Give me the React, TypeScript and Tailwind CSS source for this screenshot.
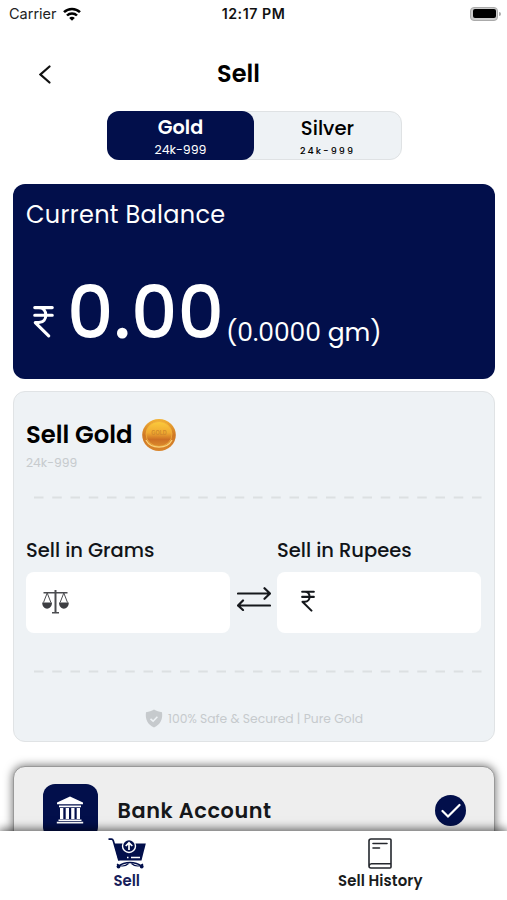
import type { ReactNode } from "react";

const RupeeIcon = ({ className }: { className: string }) => (
  <svg viewBox="0 0 20 32" fill="none" stroke="currentColor" strokeWidth="3" strokeLinecap="round" strokeLinejoin="round" className={className}>
    <path d="M1.500 2.500h17M1.500 10h17M1.500 2.500h4c9 0 9 14.500 0 14.500h-3.500L15 30" />
  </svg>
);

const WifiIcon = () => (
  <svg viewBox="0 0 18 14" className="h-[14px] w-[18px]" fill="none" stroke="#000" strokeWidth="2.500">
    <path d="M1 5.200a11.300 11.300 0 0 1 16 0M4 8.500a7 7 0 0 1 10 0" />
    <path d="M9 13.700 6.200 10.900a3.900 3.900 0 0 1 5.600 0z" fill="#000" stroke="none" />
  </svg>
);

const ScaleIcon = () => (
  <svg viewBox="0 0 27 24" className="h-6 w-[27px]" fill="none" stroke="#4b4c50">
    <path d="M13.500 0v23" strokeWidth="2" />
    <path d="M1.500 2.800h24M10 22.800h7" strokeWidth="1.600" />
    <path d="m5.200 3-3.700 9.500M5.200 3l3.700 9.500M21.800 3l-3.700 9.500M21.800 3l3.700 9.500" strokeWidth="1" />
    <path d="M.2 12.500h9.800c0 8.200-9.800 8.200-9.800 0zM17 12.500h9.800c0 8.200-9.800 8.200-9.800 0z" fill="#3d3e42" stroke="none" />
  </svg>
);

const SwapIcon = () => (
  <svg viewBox="0 0 34 24" className="h-6 w-[34px]" fill="none" stroke="#15181c" strokeWidth="2.200" strokeLinecap="round" strokeLinejoin="round">
    <path d="M1 6.500h32M27.500 1.200l5.500 5.300-5.500 5.300M33 18.500H1M6 13.500 1 18.500l5 4.500" />
  </svg>
);

const CoinIcon = () => (
  <svg viewBox="0 0 34 34" className="h-[34px] w-[34px]">
    <defs>
      <linearGradient id="rim" x1="0" y1="0" x2="0" y2="1">
        <stop offset="0" stopColor="#f3b334" />
        <stop offset=".5" stopColor="#cf7825" />
        <stop offset="1" stopColor="#d9852a" />
      </linearGradient>
      <linearGradient id="face" x1="0" y1="0" x2="0" y2="1">
        <stop offset="0" stopColor="#fbcb3c" />
        <stop offset=".45" stopColor="#f0aa31" />
        <stop offset=".72" stopColor="#cd7024" />
        <stop offset="1" stopColor="#dc8b2d" />
      </linearGradient>
    </defs>
    <ellipse cx="17" cy="17" rx="16.800" ry="16" fill="url(#rim)" />
    <ellipse cx="17" cy="16" rx="13" ry="12.500" fill="url(#face)" stroke="#f0ae3e" strokeWidth=".8" />
    <path d="M4 22c5 9.500 21 9.500 26 0" fill="none" stroke="#fad27a" strokeWidth="1.300" />
    <text x="17" y="17" fontSize="5.500" fontWeight="700" textAnchor="middle" fill="#d08a2c" fontFamily="Inter, sans-serif">
      GOLD
    </text>
  </svg>
);

const ShieldIcon = () => (
  <svg viewBox="0 0 18 19" className="h-[19px] w-[18px]">
    <path d="M9 .5c2.500 1.800 5 2.300 8 2.700C18 10 15.500 15.500 9 18.500 2.500 15.500 0 10 1 3.200 4 2.800 6.500 2.300 9 .5z" fill="#c6cacd" />
    <path d="m5.500 9.800 2.600 2.400 4.300-4.500" fill="none" stroke="#eef2f5" strokeWidth="1.600" />
  </svg>
);

const BankIcon = () => (
  <svg viewBox="0 0 28 28" className="h-7 w-7" fill="#fff">
    <path d="M14 .5 27 6.500v1.800H1V6.500zM3 9.500h22v1.800H3zM4 12h3.300v11H4zM9.700 12H13v11H9.700zM15.200 12h3.300v11h-3.300zM20.700 12H24v11h-3.300zM2.500 23.500h23v1.600h-23zM.8 25.700h26.400v1.700H.8z" />
  </svg>
);

const CartIcon = () => (
  <svg viewBox="0 0 38 31" className="h-[31px] w-[38px]" fill="none" stroke="#020f4b">
    <path d="M.5 1.200h3c1 0 1.500.7 1.800 1.600L11 22.500" strokeWidth="1.700" />
    <path d="M6 5.500h31.800L33.500 22.500h-23z" fill="#020f4b" stroke="none" />
    <path d="M10 28.500C17 23.300 27 23.300 34 28.500" strokeWidth="1.500" />
    <path d="M9 26c3 3 8 2.500 11.500-.5M35 26c-3 3-8 2.500-11.500-.5" strokeWidth="1.200" />
    <circle cx="10.500" cy="28.500" r="1.900" fill="#020f4b" stroke="none" />
    <circle cx="33.700" cy="28.500" r="1.900" fill="#020f4b" stroke="none" />
    <path d="M19 19.500h1.500M23 19.500h9" stroke="#fff" strokeWidth="1.300" />
    <circle cx="21" cy="8" r="6.500" fill="#020f4b" stroke="#fff" strokeWidth="1.400" />
    <path d="M21 12V5.500M17.700 8 21 4.800 24.300 8" stroke="#fff" strokeWidth="1.700" />
  </svg>
);

const HistoryIcon = () => (
  <svg viewBox="0 0 24 31" className="h-[31px] w-6" fill="none" stroke="#24272d" strokeWidth="1.600" strokeLinecap="round">
    <path d="M3 1H22a1 1 0 0 1 1 1V29a1 1 0 0 1-1 1H3A2 2 0 0 1 1 28v-25A2 2 0 0 1 3 1zM1.200 27.500a2.500 2.500 0 0 1 2.300-1.800H23M5 5.500h14M5 10h6.500" />
  </svg>
);

const Dashes = () => (
  <svg viewBox="0 0 450 3" className="h-[3px] w-[450px]">
    <path d="M1 1.500h448" stroke="#dce0e2" strokeWidth="2" strokeDasharray="9.500 8.750" />
  </svg>
);

const Field = ({ label, children }: { label: string; children: ReactNode }) => (
  <div className="w-[204px]">
    <p className="text-[19.5px] leading-7 font-medium whitespace-nowrap text-[#111418]">{label}</p>
    <div className="mt-[7px] flex h-[61px] items-center rounded-lg bg-white">{children}</div>
  </div>
);

export default function App() {
  return (
    <div className="flex h-[900px] w-[507px] flex-col overflow-hidden bg-white font-['Poppins','Inter',sans-serif] text-black">
      <header className="grid h-7 shrink-0 grid-cols-3 items-center font-['Inter',sans-serif]">
        <div className="flex items-center gap-[6px] pl-[9px]">
          <span className="text-[14.5px] text-[#222]">Carrier</span>
          <WifiIcon />
        </div>
        <span className="pb-px text-center text-[14.2px] font-semibold tracking-[0.55px] whitespace-nowrap text-[#111]">12:17 PM</span>
        <div className="flex items-center justify-end gap-px pr-[6px] pb-px">
          <div className="h-[14px] w-[28px] rounded-[4px] border border-[#aaa] bg-[#ccc] p-[1.5px]">
            <div className="h-full rounded-[2px] bg-black" />
          </div>
          <div className="h-1 w-[2px] rounded-r bg-[#aaa]" />
        </div>
      </header>

      <div className="grid h-[83px] shrink-0 grid-cols-3 items-center pt-[9px]">
        <svg viewBox="0 0 12 19" className="ml-[39px] h-[19px] w-3" fill="none" stroke="#111" strokeWidth="2.200" strokeLinecap="round">
          <path d="M10.500 1.500 1.500 9.500l9 8" />
        </svg>
        <h1 className="-ml-[30px] text-center text-[24px] font-semibold">Sell</h1>
      </div>

      <div className="ml-[107px] flex h-[49px] w-[295px] shrink-0 rounded-xl border border-[#dfe2e4] bg-[#eef2f5]">
        <div className="-my-px -ml-px flex w-[147px] flex-col items-center rounded-xl bg-[#020f4b] text-white">
          <span className="mt-[5px] text-[19.2px] leading-6 font-semibold">Gold</span>
          <span className="mt-px text-[12.5px] leading-[18px]">24k-999</span>
        </div>
        <div className="flex flex-1 flex-col items-center">
          <span className="mt-1 text-[19.7px] leading-6 font-medium">Silver</span>
          <span className="mt-[2px] text-[9.5px] leading-[18px] font-medium tracking-[2.1px]">24k-999</span>
        </div>
      </div>

      <section className="mx-[13px] mt-6 h-[195px] w-[482px] shrink-0 rounded-xl bg-[#020f4b] pl-[13px] text-white">
        <h2 className="pt-[14px] text-[24px] leading-[34px] tracking-[0.3px]">Current Balance</h2>
        <div className="mt-[35px] flex">
          <RupeeIcon className="mt-[38px] ml-[7px] h-[33px] w-[21px]" />
          <span className="ml-[13px] text-[72.5px] leading-[92px] font-medium">0.00</span>
          <span className="mt-[51px] ml-[2px] text-[25px] leading-[30px] whitespace-nowrap">(0.0000 gm)</span>
        </div>
      </section>

      <section className="mx-[13px] mt-3 h-[351px] w-[482px] shrink-0 rounded-xl border border-[#e0e3e5] bg-[#eef2f5] px-3">
        <div className="mt-[26px] flex items-center gap-[10px]">
          <h2 className="text-[24.3px] leading-[34px] font-semibold">Sell Gold</h2>
          <CoinIcon />
        </div>
        <p className="mt-[2px] text-[12.3px] leading-[18px] text-[#c7cbce]">24k-999</p>
        <div className="mt-[24px] ml-[7px]">
          <Dashes />
        </div>
        <div className="mt-[38px] flex">
          <Field label="Sell in Grams">
            <div className="ml-4 -mt-[2px]">
              <ScaleIcon />
            </div>
          </Field>
          <div className="mt-[50px] ml-[7px]">
            <SwapIcon />
          </div>
          <div className="ml-[6px]">
            <Field label="Sell in Rupees">
              <RupeeIcon className="-mt-[4px] ml-[24px] h-[22px] w-[14px] text-[#15181c]" />
            </Field>
          </div>
        </div>
        <div className="mt-[37px] ml-[7px]">
          <Dashes />
        </div>
        <div className="mt-[36px] flex items-center justify-center gap-[5px] text-[12.3px] whitespace-nowrap text-[#c6cacd]">
          <ShieldIcon />
          <span className="pt-px">100% Safe &amp; Secured | Pure Gold</span>
        </div>
      </section>

      <section className="mx-[13px] mt-[24px] flex h-[110px] w-[482px] shrink-0 rounded-xl border border-[#999] bg-[#eee] shadow-[0_0_9px_1px_rgba(0,0,0,0.5)]">
        <div className="mt-[17px] ml-[28.5px] flex h-[55px] w-[55px] items-center justify-center rounded-xl bg-[#020f4b] pb-[3px]">
          <BankIcon />
        </div>
        <span className="mt-[27px] ml-5 text-[20.8px] leading-[34px] font-semibold tracking-[0.6px] text-[#15171a]">Bank Account</span>
        <div className="mt-[28px] mr-[28px] ml-auto flex h-[31px] w-[31px] items-center justify-center rounded-full bg-[#020f4b]">
          <svg viewBox="0 0 20 16" className="h-4 w-5" fill="none" stroke="#fff" strokeWidth="2.200" strokeLinecap="round">
            <path d="m1.500 8 5.500 5.500L18.500 2" />
          </svg>
        </div>
      </section>

      <nav className="relative -mt-[45px] grid h-[69px] shrink-0 grid-cols-2 bg-white text-[14.9px] font-semibold shadow-[0_-1px_9px_1px_rgba(0,0,0,0.6)]">
        <div className="flex flex-col items-center pt-[7px] text-[#17205a]">
          <CartIcon />
          <span className="mt-px leading-[22px]">Sell</span>
        </div>
        <div className="flex flex-col items-center pt-[7px] text-[#1a1c20]">
          <HistoryIcon />
          <span className="mt-px leading-[22px] tracking-[0.1px]">Sell History</span>
        </div>
      </nav>
    </div>
  );
}
